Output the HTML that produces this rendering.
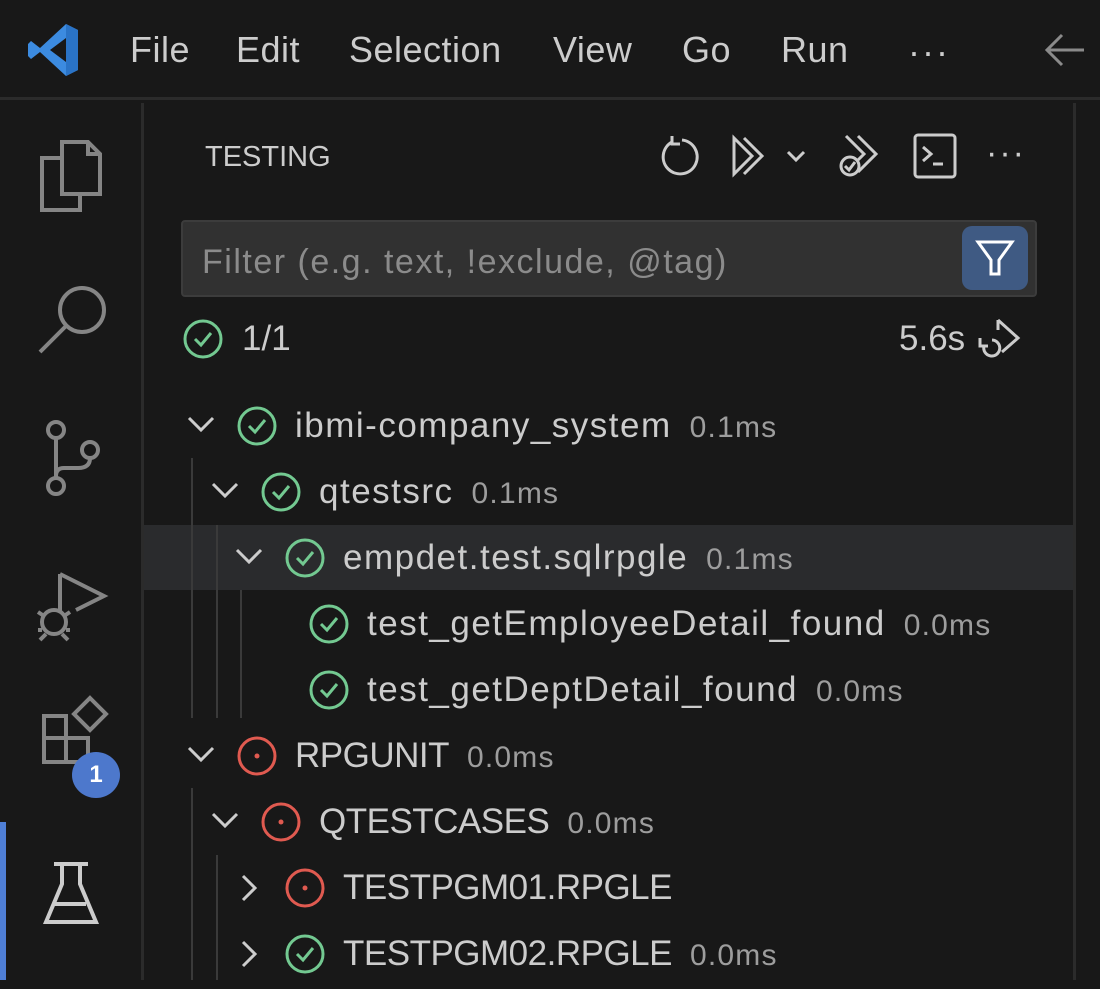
<!DOCTYPE html>
<html><head><meta charset="utf-8"><style>
*{margin:0;padding:0;box-sizing:border-box}
body{width:1100px;height:980px;background:#181818;overflow:hidden;position:relative;font-family:"Liberation Sans","DejaVu Sans",sans-serif;color:#cccccc}
.abs{position:absolute}
.menu{position:absolute;top:28px;font-size:36px;color:#cccccc;line-height:44px;letter-spacing:0.5px}
.t{position:absolute;font-size:35px;letter-spacing:1.5px;color:#cccccc;line-height:66px;white-space:nowrap}
.t.u{letter-spacing:-0.5px}
.t span{color:#9d9d9d;font-size:30px;letter-spacing:1.2px;margin-left:18px}
.g{position:absolute;width:2px;background:#3a3a3a}
</style></head><body>
<div class="abs" style="left:0;top:0;width:1100px;height:100px;background:#181818;border-bottom:3px solid #2b2b2b"></div>
<svg class="abs" style="left:26px;top:22px" width="54" height="56" viewBox="0 0 54 56">
<path d="M40 2 L52 8 L52 48 L40 54 L14 30 L5 37 L2 34 L2 22 L5 19 L14 26 Z M40 16 L24 28 L40 40 Z" fill="#3c8be0"/>
<path d="M40 2 L52 8 L52 48 L40 54 Z" fill="#2a73c6"/>
</svg>
<div class="menu" style="left:130px">File</div>
<div class="menu" style="left:236px">Edit</div>
<div class="menu" style="left:349px">Selection</div>
<div class="menu" style="left:553px">View</div>
<div class="menu" style="left:682px">Go</div>
<div class="menu" style="left:781px">Run</div>
<div class="menu" style="left:908px;top:30px;letter-spacing:2px">···</div>
<svg class="abs" style="left:1044px;top:32px" width="42" height="36"><path d="M40 18 H4 M18 3 L3 18 L18 33" stroke="#8a8a8a" stroke-width="3" fill="none"/></svg>
<div class="abs" style="left:141px;top:103px;width:3px;height:877px;background:#2b2b2b"></div>
<div class="abs" style="left:1073px;top:103px;width:3px;height:877px;background:#2b2b2b"></div>
<svg class="abs" style="left:36px;top:138px" width="68" height="76" fill="none" stroke="#858585" stroke-width="4">
<path d="M26 4 H52 L64 16 V56 H26 Z M52 4 V16 H64"/><path d="M26 20 H6 V72 H44 V56"/></svg>
<svg class="abs" style="left:36px;top:282px" width="74" height="74" fill="none" stroke="#858585" stroke-width="4"><circle cx="46" cy="28" r="22"/><path d="M30 44 L4 70"/></svg>
<svg class="abs" style="left:40px;top:418px" width="64" height="82" fill="none" stroke="#858585" stroke-width="4"><circle cx="16" cy="12" r="8"/><circle cx="16" cy="68" r="8"/><circle cx="50" cy="32" r="8"/><path d="M16 20 V60 M50 40 Q50 50 38 50 H24 Q16 50 16 58"/></svg>
<svg class="abs" style="left:34px;top:570px" width="76" height="72" fill="none" stroke="#858585" stroke-width="4"><path d="M26 4 V42 M26 4 L70 26 L42 40"/><circle cx="20" cy="52" r="12"/><path d="M4 42 L10 46 M4 60 H8 M6 70 L12 64 M36 42 L30 46 M36 60 H32 M34 70 L28 64"/></svg>
<svg class="abs" style="left:40px;top:690px" width="70" height="74" fill="none" stroke="#858585" stroke-width="4"><rect x="4" y="26" width="22" height="22"/><rect x="4" y="48" width="22" height="24"/><rect x="26" y="48" width="22" height="24"/><path d="M50 8 L66 24 L50 40 L34 24 Z"/></svg>
<div class="abs" style="left:72px;top:752px;width:48px;height:46px;border-radius:50%;background:#4d78cc;color:#fff;font-size:24px;font-weight:bold;text-align:center;line-height:46px">1</div>
<div class="abs" style="left:0;top:822px;width:6px;height:158px;background:#4f7fd6"></div>
<svg class="abs" style="left:42px;top:860px" width="60" height="68" fill="none" stroke="#cccccc" stroke-width="4"><path d="M12 4 H46 M20 4 V24 L4 62 H54 L38 24 V4 M12 44 H44"/></svg>
<div class="abs" style="left:205px;top:138px;font-size:29px;color:#cccccc;line-height:38px">TESTING</div>
<svg class="abs" style="left:658px;top:134px" width="42" height="44" fill="none" stroke="#cccccc" stroke-width="3"><path d="M14 8 A17 17 0 1 0 24 6 M14 2 V10 H22"/></svg>
<svg class="abs" style="left:730px;top:134px" width="82" height="44" fill="none" stroke="#cccccc" stroke-width="3"><path d="M4 4 L22 22 L4 40 Z M14 4 L32 22 L14 40"/><path d="M58 18 L66 26 L74 18"/></svg>
<svg class="abs" style="left:836px;top:132px" width="52" height="50" fill="none" stroke="#cccccc" stroke-width="3"><path d="M10 4 L28 22 L22 28 M22 4 L40 22 L22 40"/><circle cx="14" cy="34" r="9"/><path d="M9 34 L13 38 L19 30"/></svg>
<svg class="abs" style="left:912px;top:132px" width="46" height="48" fill="none" stroke="#cccccc" stroke-width="3"><rect x="3" y="3" width="40" height="42" rx="3"/><path d="M11 15 L19 22 L11 29 M21 32 H31"/></svg>
<div class="abs" style="left:986px;top:134px;font-size:34px;color:#cccccc;letter-spacing:2px">···</div>
<div class="abs" style="left:181px;top:220px;width:856px;height:77px;background:#313131;border:2px solid #3c3c3c;border-radius:4px"></div>
<div class="abs" style="left:202px;top:240px;font-size:34px;letter-spacing:1.5px;color:#8b8b8b;line-height:44px">Filter (e.g. text, !exclude, @tag)</div>
<div class="abs" style="left:962px;top:226px;width:66px;height:64px;background:#3f5a83;border-radius:10px"></div>
<svg class="abs" style="left:972px;top:236px" width="46" height="44" fill="none" stroke="#fff" stroke-width="3"><path d="M6 6 H40 L27 24 V38 H19 V24 Z"/></svg>
<svg class="abs" style="left:182px;top:318px" width="42" height="42" fill="none" stroke="#73c991" stroke-width="3"><circle cx="21" cy="21" r="18"/><path d="M13 21 L19 27 L29 15"/></svg>
<div class="abs" style="left:242px;top:318px;font-size:35px;color:#cccccc;line-height:42px">1/1</div>
<div class="abs" style="left:899px;top:318px;font-size:35px;color:#cccccc;line-height:42px">5.6s</div>
<svg class="abs" style="left:972px;top:316px" width="52" height="46" fill="none" stroke="#cccccc" stroke-width="3"><path d="M26 4 L46 22 L30 36 M26 4 V14"/><path d="M12 30 A8 8 0 1 0 20 24 M8 22 V30 H16"/></svg>
<div class="abs" style="left:144px;top:525px;width:929px;height:65px;background:#2a2b2d"></div>
<div class="g" style="left:191px;top:458px;height:260px"></div>
<div class="g" style="left:216px;top:525px;height:193px"></div>
<div class="g" style="left:240px;top:590px;height:128px"></div>
<div class="g" style="left:191px;top:788px;height:192px"></div>
<div class="g" style="left:216px;top:855px;height:125px"></div>

<svg width="0" height="0" style="position:absolute"><defs>
<g id="pass" fill="none" stroke="#73c991" stroke-width="3"><circle cx="20" cy="20" r="18"/><path d="M12 20 L18 26 L28 14"/></g>
<g id="fail" fill="none" stroke="#e05a50" stroke-width="3"><circle cx="20" cy="20" r="18"/><circle cx="20" cy="20" r="2.5" fill="#e05a50" stroke="none"/></g>
<path id="down" d="M4 8 L16 20 L28 8" fill="none" stroke="#cccccc" stroke-width="3"/>
<path id="right" d="M10 4 L22 16 L10 28" fill="none" stroke="#cccccc" stroke-width="3"/>
</defs></svg>

<svg class="abs" style="left:185px;top:410px" width="32" height="32"><use href="#down"/></svg>
<svg class="abs" style="left:237px;top:406px" width="40" height="40"><use href="#pass"/></svg>
<div class="t" style="left:295px;top:393px">ibmi-company_system<span>0.1ms</span></div>

<svg class="abs" style="left:209px;top:476px" width="32" height="32"><use href="#down"/></svg>
<svg class="abs" style="left:261px;top:472px" width="40" height="40"><use href="#pass"/></svg>
<div class="t" style="left:319px;top:459px">qtestsrc<span>0.1ms</span></div>

<svg class="abs" style="left:233px;top:542px" width="32" height="32"><use href="#down"/></svg>
<svg class="abs" style="left:285px;top:538px" width="40" height="40"><use href="#pass"/></svg>
<div class="t" style="left:343px;top:525px">empdet.test.sqlrpgle<span>0.1ms</span></div>

<svg class="abs" style="left:309px;top:604px" width="40" height="40"><use href="#pass"/></svg>
<div class="t" style="left:367px;top:591px">test_getEmployeeDetail_found<span>0.0ms</span></div>

<svg class="abs" style="left:309px;top:670px" width="40" height="40"><use href="#pass"/></svg>
<div class="t" style="left:367px;top:657px">test_getDeptDetail_found<span>0.0ms</span></div>

<svg class="abs" style="left:185px;top:740px" width="32" height="32"><use href="#down"/></svg>
<svg class="abs" style="left:237px;top:736px" width="40" height="40"><use href="#fail"/></svg>
<div class="t u" style="left:295px;top:723px">RPGUNIT<span>0.0ms</span></div>

<svg class="abs" style="left:209px;top:806px" width="32" height="32"><use href="#down"/></svg>
<svg class="abs" style="left:261px;top:802px" width="40" height="40"><use href="#fail"/></svg>
<div class="t u" style="left:319px;top:789px">QTESTCASES<span>0.0ms</span></div>

<svg class="abs" style="left:233px;top:872px" width="32" height="32"><use href="#right"/></svg>
<svg class="abs" style="left:285px;top:868px" width="40" height="40"><use href="#fail"/></svg>
<div class="t u" style="left:343px;top:855px">TESTPGM01.RPGLE</div>

<svg class="abs" style="left:233px;top:938px" width="32" height="32"><use href="#right"/></svg>
<svg class="abs" style="left:285px;top:934px" width="40" height="40"><use href="#pass"/></svg>
<div class="t u" style="left:343px;top:921px">TESTPGM02.RPGLE<span>0.0ms</span></div>
</body></html>
